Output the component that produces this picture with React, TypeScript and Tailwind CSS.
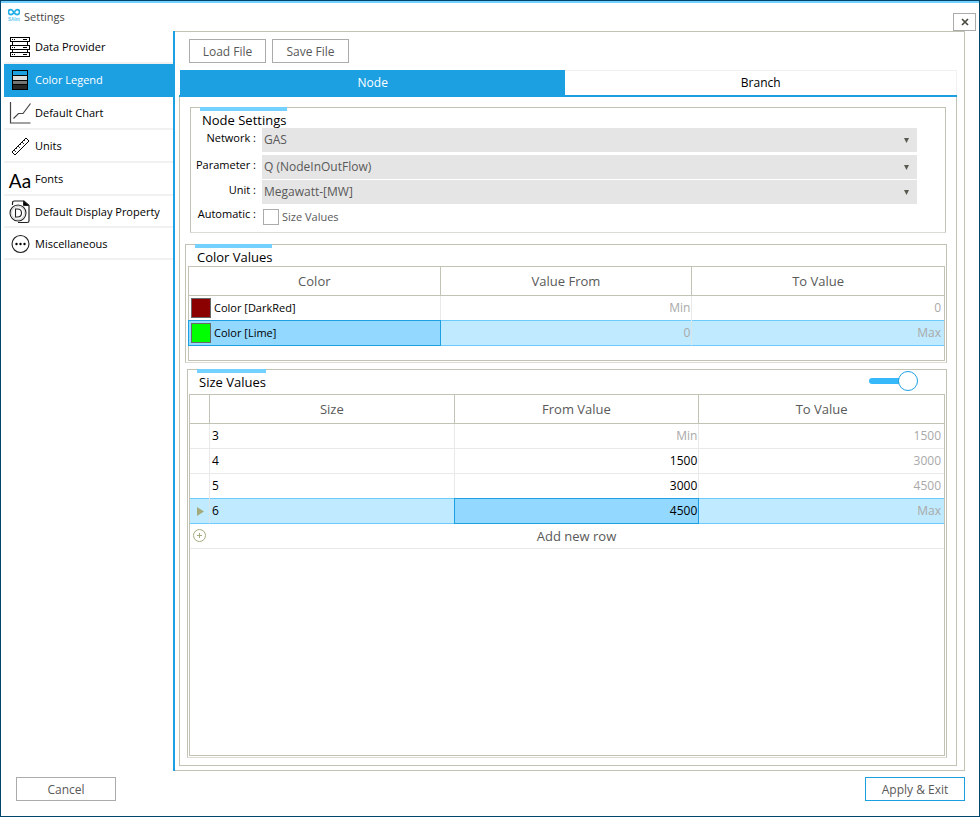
import { useState } from 'react';
import type { ReactNode } from 'react';
import clsx from 'clsx';

interface Cell {
  text: string;
  muted?: boolean;
}

const ServerIcon = () => (
  <svg width="22" height="22" viewBox="0 0 22 22" fill="white" stroke="black" shapeRendering="crispEdges">
    <rect x="1.5" y="1.5" width="19" height="4" />
    <rect x="1.5" y="9.5" width="19" height="4" />
    <rect x="1.5" y="16.5" width="19" height="4" />
    <path d="M3.5 6v3M18.5 6v3M3.5 14v2M18.5 14v2M3 3.5h1M5 3.5h1M14 3.5h4M3 11.5h1M5 11.5h1M14 11.5h4M3 18.5h1M5 18.5h1M14 18.5h4" />
  </svg>
);

const LegendIcon = () => (
  <svg width="22" height="22" viewBox="0 0 22 22" shapeRendering="crispEdges">
    <rect x="3" y="1" width="16" height="20" fill="black" />
    <rect x="4" y="2" width="14" height="4" fill="#1ca0e2" />
    <rect x="4" y="7" width="14" height="4" fill="#dcdcdc" />
    <rect x="4" y="12" width="14" height="3" fill="#757575" />
    <rect x="4" y="16" width="14" height="4" fill="#272727" />
  </svg>
);

const ChartIcon = () => (
  <svg width="22" height="24" viewBox="0 0 22 24" fill="none" stroke="#444">
    <path d="M1.5 1v21h20" strokeWidth="1.2" />
    <path d="M4.5 17.5l5-5h4.500l7.500-10" strokeWidth="1.2" />
  </svg>
);

const RulerIcon = () => (
  <svg width="22" height="22" viewBox="0 0 22 22" fill="none" stroke="black">
    <path d="M3 17L17 3l3 3L6 20z" strokeWidth="1" />
    <path d="M5 15l2 2M7 13l1 1M9 11l2 2M11 9l1 1M13 7l2 2M15 5l1 1" strokeWidth="0.8" />
  </svg>
);

const DisplayIcon = () => (
  <svg width="22" height="26" viewBox="0 0 22 26" fill="none" stroke="#222">
    <path d="M3.5 6V4q0-2 2-2H15l5 4.500V22q0 1.500-2 1.500H9" strokeWidth="1.2" />
    <path d="M14.5 2v4.500H20z" fill="black" />
    <circle cx="9" cy="14" r="8" strokeWidth="1.1" fill="white" />
    <circle cx="9" cy="14" r="6.5" strokeWidth="0.5" stroke="#999" />
    <path d="M6.5 10v8H8.500q4 0 4-4t-4-4z" strokeWidth="1.1" />
  </svg>
);

const MoreIcon = () => (
  <svg width="22" height="22" viewBox="0 0 22 22" fill="none" stroke="#222">
    <circle cx="11.5" cy="11" r="8.5" strokeWidth="1.1" />
    <g fill="black" stroke="none">
      <circle cx="7.5" cy="11" r="1.2" />
      <circle cx="11.5" cy="11" r="1.2" />
      <circle cx="15.5" cy="11" r="1.2" />
    </g>
  </svg>
);

const Logo = () => (
  <svg width="12" height="14" viewBox="0 0 12 14" fill="none" stroke="#23b0e6">
    <path d="M6 4.500C4.800 2.700 4 1.700 2.900 1.700a2.500 2.500 0 0 0 0 5C4 6.700 4.800 6.200 6 4.500s2-2.800 3.100-2.800a2.500 2.500 0 0 1 0 5C8 6.700 7.200 6.200 6 4.500z" strokeWidth="1.8" />
    <text x="0" y="12.500" fontSize="4.500" fontWeight="bold" fontFamily="Liberation Sans, sans-serif" fill="#5cc6ee" stroke="none">
      SAInt
    </text>
  </svg>
);

const menu = [
  { label: 'Data Provider', icon: <ServerIcon /> },
  { label: 'Color Legend', icon: <LegendIcon /> },
  { label: 'Default Chart', icon: <ChartIcon /> },
  { label: 'Units', icon: <RulerIcon /> },
  { label: 'Fonts', icon: <span className="pt-1 font-[Lato] text-[19px] leading-5 text-black">Aa</span> },
  { label: 'Default Display Property', icon: <DisplayIcon /> },
  { label: 'Miscellaneous', icon: <MoreIcon /> },
];

const settings = [
  { id: 'network', label: 'Network :', value: 'GAS' },
  { id: 'parameter', label: 'Parameter :', value: 'Q (NodeInOutFlow)' },
  { id: 'unit', label: 'Unit :', value: 'Megawatt-[MW]' },
];

const colorRows = [
  { name: 'Color [DarkRed]', swatch: 'bg-[#8b0000]', from: 'Min', to: '0' },
  { name: 'Color [Lime]', swatch: 'bg-[#00ff00]', from: '0', to: 'Max' },
];

const sizeRows: { size: string; from: Cell; to: string }[] = [
  { size: '3', from: { text: 'Min', muted: true }, to: '1500' },
  { size: '4', from: { text: '1500' }, to: '3000' },
  { size: '5', from: { text: '3000' }, to: '4500' },
  { size: '6', from: { text: '4500' }, to: 'Max' },
];

function Group({ bar, className, children }: { bar: string; className?: string; children: ReactNode }) {
  return (
    <section className={clsx('relative border border-[#c3c3b5] border-b-[#dcdcd4]', className)}>
      <div className={clsx('absolute -top-px left-[9px] h-1 bg-[#74d0ff]', bar)} />
      {children}
    </section>
  );
}

function Th({ children }: { children?: ReactNode }) {
  return (
    <th className="h-[29px] border-r border-b border-[#c3c3b5] p-0 text-center text-[13px] font-normal text-[#595959] last:border-r-0">
      {children}
    </th>
  );
}

interface TdProps {
  selected?: boolean;
  active?: boolean;
  muted?: boolean;
  right?: boolean;
  children?: ReactNode;
}

function Td({ selected, active, muted, right, children }: TdProps) {
  return (
    <td
      className={clsx(
        'relative h-[25px] border-r border-b py-0 pl-0.5 last:border-r-0',
        right ? 'pr-px text-right last:pr-[3px]' : 'pr-0.5',
        selected ? 'border-r-[#d8e6ec] border-b-[#6ccbfb] after:absolute after:inset-x-0 after:-top-px after:h-px after:bg-[#6ccbfb]' : 'border-[#e9e9e9]',
        selected && !active && 'bg-[#c0eaff]',
        active && 'bg-[#93d8ff] before:absolute before:-inset-px before:z-10 before:border before:border-[#1ca0e2]',
        muted ? 'text-[#a9a9a9]' : 'text-black'
      )}
    >
      {children}
    </td>
  );
}

export default function App() {
  const [page, setPage] = useState('Color Legend');
  const [tab, setTab] = useState('Node');

  return (
    <div className="flex min-h-screen flex-col border border-[#00456b] bg-white font-['Open_Sans',sans-serif] text-[12px] leading-4 text-[#595959]">
      <header className="flex h-[30px] justify-between border-t-2 border-[#74d0ff] pr-[3px] pl-[7px]">
        <div className="flex items-start gap-1 pt-[5px]">
          <Logo />
          <h1 className="pt-px text-[11px] text-[#444]">Settings</h1>
        </div>
        <button aria-label="Close" className="mt-2.5 flex h-[18px] w-[23px] items-center justify-center border border-[#ababab] bg-white">
          <svg width="8" height="8" viewBox="0 0 8 8" stroke="#4a4a42" strokeWidth="1.7">
            <path d="M1 1l6 6M7 1l-6 6" />
          </svg>
        </button>
      </header>

      <div className="flex flex-1 pr-[14px] pl-[3px]">
        <nav className="w-[169px] shrink-0">
          {menu.map((item, i) => (
            <button
              key={item.label}
              onClick={() => setPage(item.label)}
              className={clsx(
                'flex w-full items-center gap-1 border-b-2 pt-px pl-[5px] text-left text-[11px] whitespace-nowrap',
                i < 5 ? 'h-[33px]' : 'h-8',
                item.label === page ? 'border-[#1ca0e2] bg-[#1ca0e2] text-white' : 'border-[#f1f1f1] text-black'
              )}
            >
              <span className="flex w-[22px] shrink-0 justify-center">{item.icon}</span>
              {item.label}
            </button>
          ))}
        </nav>

        <main className="flex flex-1 flex-col border-l-2 border-l-[#1ca0e2]">
          <div className="flex flex-1 flex-col border-t border-r border-b border-[#c3c3b5] pt-[7px] pr-[7px] pb-1 pl-1">
            <div className="flex gap-1.5 pl-2.5">
              <button className="h-6 w-[77px] border border-[#ababab] pt-0.5">Load File</button>
              <button className="h-6 w-[77px] border border-[#ababab] pt-0.5">Save File</button>
            </div>
            <div role="tablist" className="mt-[7px] grid h-[27px] grid-cols-[385fr_391fr] border-b-2 border-[#1ca0e2] pl-px">
              {['Node', 'Branch'].map((name) => (
                <button
                  key={name}
                  role="tab"
                  aria-selected={tab === name}
                  onClick={() => setTab(name)}
                  className={clsx(tab === name ? 'bg-[#1ca0e2] text-white' : 'border-t border-r border-[#f1f1f1] text-black')}
                >
                  {name}
                </button>
              ))}
            </div>

            <div className="flex flex-1 flex-col border-r border-b border-l border-[#c3c3b5] pt-2.5 pr-[9px] pb-[7px] pl-[5px]">
              <Group bar="w-[87px]" className="mr-px ml-[5px] h-[126px]">
                <h2 className="pt-1 pl-[11px] text-[13px] text-black">Node Settings</h2>
                <div className="grid grid-cols-[65px_1fr] gap-x-1.5 gap-y-px pr-7">
                  {settings.map((s) => (
                    <div key={s.id} className="contents">
                      <label htmlFor={s.id} className="pt-0.5 text-right text-[11px] whitespace-nowrap text-black">
                        {s.label}
                      </label>
                      <div className={clsx('relative', s.id === 'network' && 'mb-0.5')}>
                        <select id={s.id} className="block h-6 w-full appearance-none bg-[#e5e5e5] px-0.5 text-[#595959]">
                          <option>{s.value}</option>
                        </select>
                        <svg className="pointer-events-none absolute top-2.5 right-2 h-[5px] w-[5px]" viewBox="0 0 5 5" fill="#595950">
                          <path d="M0 0h5L2.500 5z" />
                        </svg>
                      </div>
                    </div>
                  ))}
                  <span className="pt-px text-right text-[11px] whitespace-nowrap text-black">Automatic :</span>
                  <label className="flex items-center gap-[3px] pt-[3px] pl-px text-[11px]">
                    <input type="checkbox" className="h-4 w-4 appearance-none border border-[#ababab] bg-white checked:bg-[#1ca0e2]" />
                    <span className="pt-px">Size Values</span>
                  </label>
                </div>
              </Group>

              <Group bar="w-[77px]" className="mt-[11px] pr-px pb-px pl-0.5">
                <h2 className="h-[21px] pt-1 pl-[9px] text-[13px] text-black">Color Values</h2>
                <div className="h-[95px] border border-[#c3c3b5]">
                  <table className="w-full table-fixed border-separate border-spacing-0">
                    <thead>
                      <tr>
                        <Th>Color</Th>
                        <Th>Value From</Th>
                        <Th>To Value</Th>
                      </tr>
                    </thead>
                    <tbody>
                      {colorRows.map((row, i) => (
                        <tr key={row.name}>
                          <Td selected={i === 1} active={i === 1}>
                            <div className="flex items-center gap-[3px] text-[11px]">
                              <span className={clsx('h-5 w-5 border border-[#696969]', row.swatch)} />
                              {row.name}
                            </div>
                          </Td>
                          <Td selected={i === 1} muted right>{row.from}</Td>
                          <Td selected={i === 1} muted right>{row.to}</Td>
                        </tr>
                      ))}
                    </tbody>
                  </table>
                </div>
              </Group>

              <Group bar="w-[69px]" className="mt-1.5 ml-0.5 flex flex-1 flex-col pr-px pb-px pl-px">
                <div className="flex h-6 justify-between pr-[27px] pl-2.5">
                  <h2 className="pt-1 text-[13px] text-black">Size Values</h2>
                  <label className="relative mt-px block h-5 w-[49px]">
                    <input type="checkbox" defaultChecked aria-label="Use size values" className="peer sr-only" />
                    <span className="absolute top-[7px] left-0 h-1.5 w-8 rounded-sm bg-[#36b8fa]" />
                    <span className="absolute top-0 right-0 h-5 w-5 rounded-full border border-[#1ca0e2] bg-white peer-not-checked:right-auto peer-not-checked:left-0" />
                  </label>
                </div>
                <div className="flex-1 border border-[#c3c3b5]">
                  <table className="w-full table-fixed border-separate border-spacing-0">
                    <colgroup>
                      <col className="w-5" />
                      <col />
                      <col />
                      <col />
                    </colgroup>
                    <thead>
                      <tr>
                        <Th />
                        <Th>Size</Th>
                        <Th>From Value</Th>
                        <Th>To Value</Th>
                      </tr>
                    </thead>
                    <tbody>
                      {sizeRows.map((row, i) => (
                        <tr key={row.size}>
                          <Td selected={i === 3}>
                            {i === 3 && (
                              <svg className="ml-[5px] h-[9px] w-[7px]" viewBox="0 0 7 9" fill="#a3ab7c">
                                <path d="M0 0l7 4.500L0 9z" />
                              </svg>
                            )}
                          </Td>
                          <Td selected={i === 3}>{row.size}</Td>
                          <Td selected={i === 3} active={i === 3} muted={row.from.muted} right>{row.from.text}</Td>
                          <Td selected={i === 3} muted right>{row.to}</Td>
                        </tr>
                      ))}
                      <tr>
                        <td colSpan={4} className="h-[25px] border-b border-[#e9e9e9] p-0">
                          <button className="relative block w-full pl-[19px] text-center text-[13px]">
                            <svg className="absolute top-px left-[3px] h-[13px] w-[13px]" viewBox="0 0 13 13" fill="none" stroke="#a3ab7c">
                              <circle cx="6.5" cy="6.5" r="6" />
                              <path d="M4 6.500h5M6.500 4v5" />
                            </svg>
                            Add new row
                          </button>
                        </td>
                      </tr>
                    </tbody>
                  </table>
                </div>
              </Group>
            </div>
          </div>
        </main>
      </div>

      <footer className="flex h-[45px] justify-between pt-1.5 pr-[14px] pl-[15px]">
        <button className="h-6 w-[100px] border border-[#ababab] pt-0.5">Cancel</button>
        <button className="h-6 w-[100px] border border-[#1ca0e2] pt-0.5">Apply &amp; Exit</button>
      </footer>
    </div>
  );
}
